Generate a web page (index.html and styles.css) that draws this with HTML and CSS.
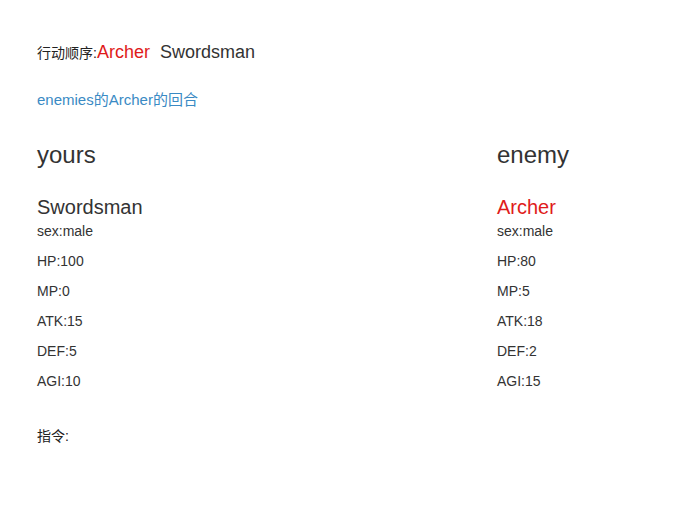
FILE: index.html
```html
<!DOCTYPE html>
<html lang="zh">
<head>
<meta charset="utf-8">
<title>Battle</title>
<link rel="stylesheet" href="styles.css">
</head>
<body>
<div class="page">
  <div class="order">行动顺序:<span class="big red">Archer</span><span class="gap"></span><span class="big">Swordsman</span></div>
  <div class="turn"><a class="link" href="#">enemies的Archer的回合</a></div>
  <div class="sides">
    <div class="side">
      <h3 class="side-title">yours</h3>
      <h4 class="name">Swordsman</h4>
      <div class="stat first">sex:male</div>
      <div class="stat">HP:100</div>
      <div class="stat">MP:0</div>
      <div class="stat">ATK:15</div>
      <div class="stat">DEF:5</div>
      <div class="stat">AGI:10</div>
    </div>
    <div class="side">
      <h3 class="side-title">enemy</h3>
      <h4 class="name red">Archer</h4>
      <div class="stat first">sex:male</div>
      <div class="stat">HP:80</div>
      <div class="stat">MP:5</div>
      <div class="stat">ATK:18</div>
      <div class="stat">DEF:2</div>
      <div class="stat">AGI:15</div>
    </div>
  </div>
  <div class="command">指令:</div>
</div>
</body>
</html>
```
FILE: styles.css
```css
html, body {
  margin: 0;
  padding: 0;
  background: #ffffff;
}
body {
  font-family: "Liberation Sans", Arial, "Noto Sans CJK SC", sans-serif;
  color: #333333;
  font-size: 14px;
}
.page {
  padding-left: 37px;
  padding-top: 40px;
}
.order {
  height: 24px;
  line-height: 24px;
  font-size: 14px;
  color: #222;
}
.big {
  font-size: 18px;
  color: #333;
}
.red {
  color: #e01b1b !important;
}
.gap {
  display: inline-block;
  width: 10px;
}
.turn {
  margin-top: 26px;
  line-height: 20px;
  font-size: 15px;
}
.link {
  color: #3a8ac4;
  text-decoration: none;
}
.sides {
  display: grid;
  grid-template-columns: 460px 1fr;
  margin-top: 30px;
}
.side-title {
  margin: 0;
  font-size: 24px;
  font-weight: normal;
  line-height: 30px;
  color: #333;
}
.name {
  margin: 25px 0 0;
  font-size: 20px;
  font-weight: normal;
  line-height: 24px;
  color: #333;
}
.stat {
  line-height: 20px;
  margin-top: 10px;
}
.stat.first {
  margin-top: 2px;
}
.command {
  margin-top: 35px;
  line-height: 20px;
  color: #222;
}
```
